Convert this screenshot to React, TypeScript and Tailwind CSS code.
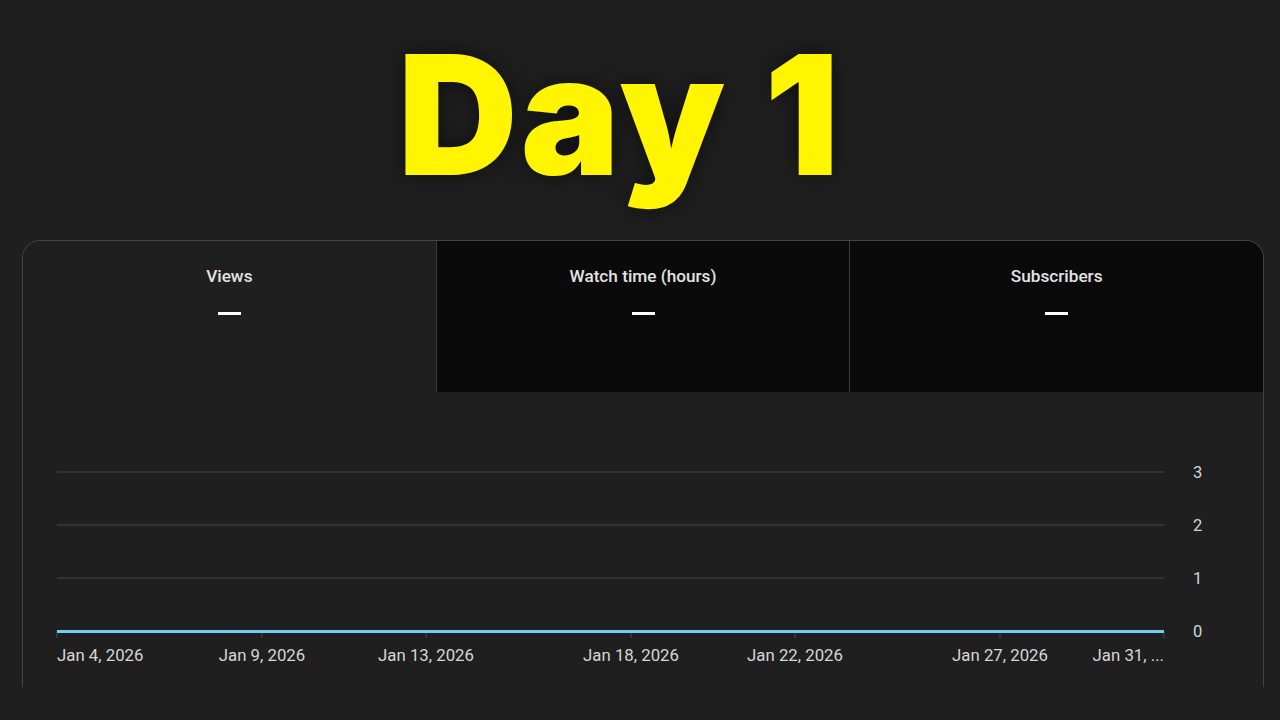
import React from "react";

const xLabels = [
  { t: "Jan 4, 2026", x: 0, align: "left" },
  { t: "Jan 9, 2026", x: 205, align: "center" },
  { t: "Jan 13, 2026", x: 369, align: "center" },
  { t: "Jan 18, 2026", x: 574, align: "center" },
  { t: "Jan 22, 2026", x: 738, align: "center" },
  { t: "Jan 27, 2026", x: 943, align: "center" },
  { t: "Jan 31, ...", x: 1107, align: "right" },
];

const ticks = [0, 205, 369, 574, 738, 943, 1107];

function Tab({ label, active, border }: { label: string; active?: boolean; border?: boolean }) {
  return (
    <div
      className={`flex-1 h-[151px] flex flex-col items-center pt-[25px] ${
        active ? "bg-[#1f1f1f]" : "bg-[#0a0a0a]"
      } ${border ? "border-l border-[#3a3a3a]" : ""}`}
    >
      <div className="text-[17.2px] font-medium text-[#e3e3e3] leading-[20px]">{label}</div>
      <div className="mt-[26px] w-[23px] h-[3px] bg-white" />
    </div>
  );
}

export default function App() {
  return (
    <div
      className="w-[1280px] h-[720px] bg-[#1f1f1f] overflow-hidden flex flex-col"
      style={{ fontFamily: "Roboto, 'Noto Sans', sans-serif" }}
    >
      <div className="h-[240px] flex justify-center items-start pr-[40px]">
        <div
          className="text-[#fff500] text-[166px] font-black leading-[1.25] mt-[11px] tracking-[3px] [text-shadow:0_0_24px_rgba(0,0,0,0.55)]"
          style={{ fontFamily: "Inter, 'Open Sans', sans-serif" }}
        >
          Day 1
        </div>
      </div>
      <div className="ml-[22px] w-[1242px] h-[447px] border-l border-t border-r border-[#444] rounded-t-[18px] overflow-hidden flex flex-col">
        <div className="flex">
          <Tab label="Views" active />
          <Tab label="Watch time (hours)" border />
          <Tab label="Subscribers" border />
        </div>
        <div className="relative flex-1">
          <div className="absolute left-[34px] top-[79px] w-[1107px] h-[170px]">
            <svg width="1107" height="170" className="absolute left-0 top-0 overflow-visible">
              <line x1="0" x2="1107" y1="1" y2="1" stroke="#3a3a3a" strokeWidth="1.5" />
              <line x1="0" x2="1107" y1="54" y2="54" stroke="#3a3a3a" strokeWidth="1.5" />
              <line x1="0" x2="1107" y1="107" y2="107" stroke="#3a3a3a" strokeWidth="1.5" />
              {ticks.map((x) => (
                <line key={x} x1={x} x2={x} y1="160" y2="167" stroke="#4a4a4a" strokeWidth="1" />
              ))}
              <line x1="0" x2="1107" y1="160.5" y2="160.5" stroke="#6fd0f5" strokeWidth="3" />
            </svg>
            {["3", "2", "1", "0"].map((v, i) => (
              <div
                key={v}
                className="absolute left-[1136px] text-[16.5px] text-[#d6d6d6] leading-[20px]"
                style={{ top: 2 + i * 53 - 10 }}
              >
                {v}
              </div>
            ))}
            {xLabels.map((l) => (
              <div
                key={l.t}
                className="absolute top-[174px] text-[16.8px] text-[#d6d6d6] leading-[20px] whitespace-nowrap"
                style={{
                  left: l.x,
                  transform:
                    l.align === "center" ? "translateX(-50%)" : l.align === "right" ? "translateX(-100%)" : undefined,
                }}
              >
                {l.t}
              </div>
            ))}
          </div>
        </div>
      </div>
    </div>
  );
}
